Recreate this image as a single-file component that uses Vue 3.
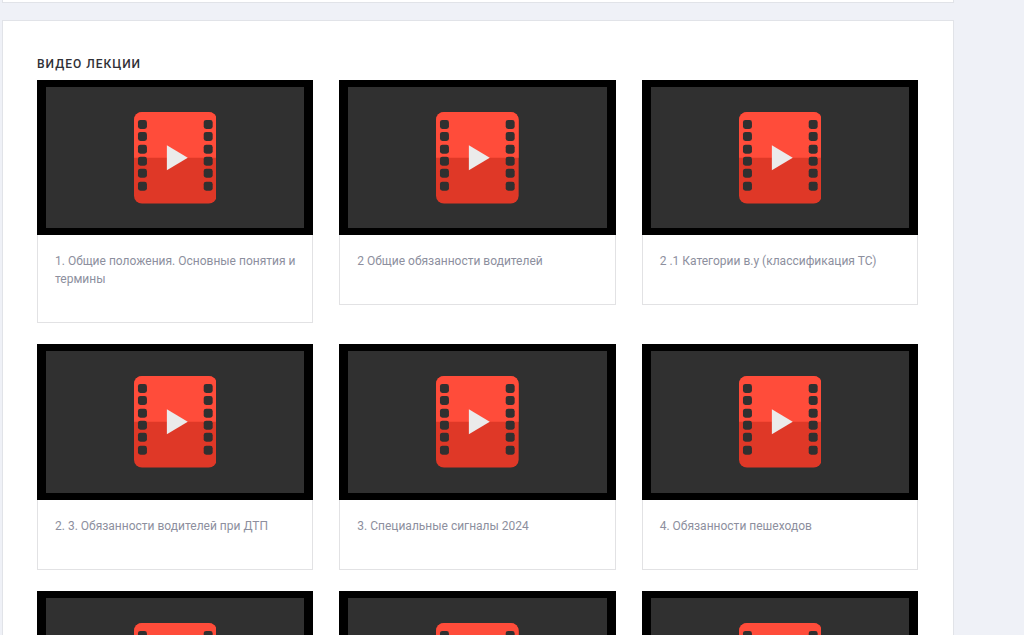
<script setup>
const lectures = [
  '1. Общие положения. Основные понятия и термины',
  '2 Общие обязанности водителей',
  '2 .1 Категории в.у (классификация ТС)',
  '2. 3. Обязанности водителей при ДТП',
  '3. Специальные сигналы 2024',
  '4. Обязанности пешеходов',
  '',
  '',
  '',
]
const holes = [8, 20, 33, 45, 57, 70]
</script>

<template>
  <div class="page">
    <div class="previous"></div>
    <main class="panel">
      <h2 class="heading">Видео лекции</h2>
      <div class="grid">
        <article v-for="(title, i) in lectures" :key="i" class="card">
          <div class="thumb">
            <div class="screen">
              <svg class="film" viewBox="0 0 83 92" aria-hidden="true">
                <rect width="83" height="92" rx="8" fill="#df3827" />
                <path d="M0 46V8a8 8 0 0 1 8-8h67a8 8 0 0 1 8 8v38z" fill="#ff4c3a" />
                <g fill="#303030">
                  <template v-for="y in holes" :key="y">
                    <rect x="4" :y="y" width="9" height="9" rx="2.5" />
                    <rect x="70" :y="y" width="9" height="9" rx="2.5" />
                  </template>
                </g>
                <path d="M33 33.500L54 46L33 58.500z" fill="#ebebeb" />
              </svg>
            </div>
          </div>
          <p class="title">{{ title }}</p>
        </article>
      </div>
    </main>
  </div>
</template>

<style>
body {
  margin: 0;
  background: #eff1f7;
}
</style>

<style scoped>
.page {
  box-sizing: border-box;
  height: 100vh;
  overflow: hidden;
  padding: 0 70px 0 2px;
  font-family: Roboto, "Liberation Sans", sans-serif;
}
.previous {
  height: 2px;
  margin-bottom: 17px;
  background: #fff;
  border: 1px solid #e1e3e8;
  border-top: 0;
}
.panel {
  padding: 34px 35px 34px 34px;
  background: #fff;
  border: 1px solid #e1e3e8;
}
.heading {
  margin: 0 0 7px;
  font-size: 12px;
  line-height: 18px;
  font-weight: 500;
  letter-spacing: 1px;
  text-transform: uppercase;
  color: #303036;
}
.grid {
  display: grid;
  grid-template-columns: repeat(3, 1fr);
  gap: 21px 26px;
  align-items: start;
}
.thumb {
  box-sizing: border-box;
  aspect-ratio: 16 / 9;
  padding: 7px 9px;
  background: #000;
}
.screen {
  display: flex;
  align-items: center;
  justify-content: center;
  height: 100%;
  background: #303030;
}
.film {
  width: 32%;
}
.title {
  margin: 0;
  min-height: 18px;
  padding: 17px 16px 34px 17px;
  border: 1px solid #e2e2e4;
  border-top: 0;
  font-size: 12px;
  line-height: 18px;
  color: #8d8f9e;
}
</style>
